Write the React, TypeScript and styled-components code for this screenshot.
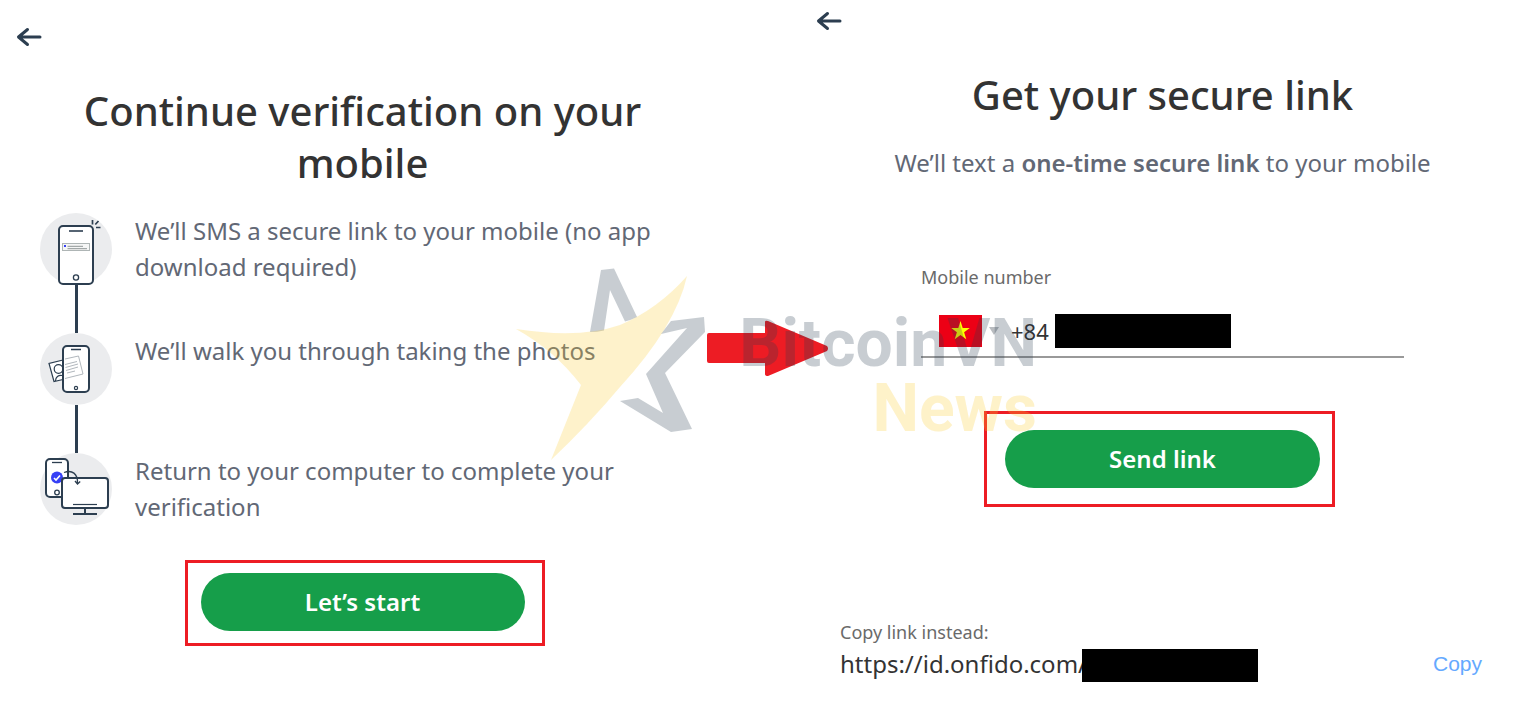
import React from "react";
import styled, { createGlobalStyle } from "styled-components";

const Global = createGlobalStyle`
  *, *::before, *::after { box-sizing: border-box; }
  body { margin: 0; background: #fff; font-family: "Noto Sans", sans-serif; color: #333; }
  h1, p, ol { margin: 0; padding: 0; }
`;

const Page = styled.main`
  position: relative;
  display: flex;
  justify-content: space-between;
  gap: 75px;
  min-height: 100vh;
  padding-right: 3px;
  overflow: hidden;
`;

const Panel = styled.section<{ $top: number }>`
  flex: 1;
  display: flex;
  flex-direction: column;
  padding-top: ${(p) => p.$top}px;
`;

const BackButton = styled.button`
  align-self: flex-start;
  margin-left: 16px;
  padding: 0;
  width: 26px;
  height: 20px;
  border: 0;
  background: none;
  svg { display: block; }
`;

const Title = styled.h1`
  margin-top: 38px;
  padding: 0 48px;
  font-size: 40px;
  line-height: 52px;
  font-weight: 500;
  text-align: center;
`;

const Subtitle = styled.p`
  margin-top: 24px;
  font-size: 24px;
  line-height: 36px;
  text-align: center;
  color: #626875;
  strong { font-weight: 600; }
`;

const Steps = styled.ol`
  list-style: none;
  margin: 24px 40px 0;
`;

const Step = styled.li`
  display: flex;
  gap: 23px;
  font-size: 24px;
  line-height: 36px;
  color: #626875;
`;

const Marker = styled.div<{ $last?: boolean }>`
  display: flex;
  flex-direction: column;
  align-items: center;
  flex: none;
  width: 72px;
  height: ${(p) => (p.$last ? 72 : 120)}px;
  &::after {
    content: "";
    flex: 1;
    width: 3px;
    background: #2c3e50;
  }
  svg { display: block; flex: none; }
`;

/* Red frame drawn round the button without taking part in the flow. */
const Callout = styled.div<{ $inset: string; $gap: number }>`
  position: relative;
  align-self: center;
  margin-top: ${(p) => p.$gap}px;
  &::after {
    content: "";
    position: absolute;
    inset: ${(p) => p.$inset};
    border: 3px solid #ed1c24;
    pointer-events: none;
  }
`;

const Primary = styled.button<{ $width: number }>`
  display: block;
  width: ${(p) => p.$width}px;
  height: 58px;
  padding: 0;
  border: 0;
  border-radius: 29px;
  background: #169e4a;
  color: #fff;
  font: 600 24px/36px "Noto Sans", sans-serif;
`;

const Field = styled.div`
  display: flex;
  flex-direction: column;
  align-self: center;
  width: 483px;
  margin-top: 83px;
`;

const SmallLabel = styled.label`
  font-size: 18px;
  line-height: 27px;
  color: #6a6a6a;
`;

const PhoneRow = styled.div`
  display: flex;
  align-items: center;
  margin-top: 17px;
  height: 50px;
  padding: 0 0 2px 18px;
  border-bottom: 2px solid #999;
`;

const Country = styled.button`
  display: flex;
  align-items: center;
  gap: 7px;
  width: 72px;
  padding: 0;
  border: 0;
  background: none;
`;

const Phone = styled.input`
  width: 44px;
  padding: 0;
  border: 0;
  outline: 0;
  background: none;
  color: #333;
  font: 400 22px/30px "Noto Sans", sans-serif;
`;

const Redaction = styled.span<{ $height: number }>`
  flex: none;
  width: 176px;
  height: ${(p) => p.$height}px;
  background: #000;
`;

const CopyBlock = styled.div`
  display: flex;
  flex-direction: column;
  margin: 131px 43px 0 40px;
`;

const CopyRow = styled.div`
  display: flex;
  align-items: center;
  height: 36px;
  ${Redaction} {
    align-self: flex-end;
    margin-left: -5px;
  }
`;

const Url = styled.output`
  font-size: 24px;
  line-height: 36px;
  color: #333;
`;

const CopyButton = styled.button`
  margin-left: auto;
  padding: 0;
  border: 0;
  background: none;
  color: #65a9ff;
  font: 400 21px/30px "Liberation Sans", sans-serif;
`;

const Overlay = styled.svg`
  position: absolute;
  top: 260px;
  left: calc(50% - 264px);
  pointer-events: none;
`;

const Wordmark = styled.text`
  font: 700 66px "Roboto", sans-serif;
  text-anchor: end;
`;

const Ink = "#2c3e50";

const BackArrow = () => (
  <svg width="26" height="20" viewBox="0 0 26 20" fill="none" stroke={Ink} strokeWidth="3" strokeLinecap="round" strokeLinejoin="round">
    <path d="M24 10H3M11.500 2.500L2.500 10L11.500 17.500" />
  </svg>
);

const SmsIcon = () => (
  <svg width="72" height="72" viewBox="0 0 72 72" fill="none" overflow="visible">
    <circle cx="36" cy="36" r="36" fill="#ebecee" />
    <rect x="19" y="13" width="34" height="58" rx="4" fill="#fff" stroke={Ink} strokeWidth="2" />
    <path d="M29 18h14" stroke={Ink} strokeWidth="1.600" />
    <circle cx="36" cy="64.500" r="2.600" stroke={Ink} strokeWidth="1.300" />
    <rect x="22.500" y="30.500" width="27" height="7" fill="#f5f6f6" stroke="#aeb5b5" />
    <rect x="24" y="32" width="2" height="2" fill="#3640f5" />
    <path d="M27.500 33.300H43M27.500 35.700H47" stroke="#8f9696" strokeWidth="1" />
    <path d="M52.500 7v4.500M55.300 11.500L58.500 8M56 14.500h4.500" stroke={Ink} strokeWidth="1.700" />
  </svg>
);

const PhotoIcon = () => (
  <svg width="72" height="72" viewBox="0 0 72 72" fill="none">
    <circle cx="36" cy="36" r="36" fill="#ebecee" />
    <g stroke={Ink} strokeWidth="1.200">
      <path d="M23 27L9 30.500L14 48.500L23 46.500" fill="#fff" />
      <circle cx="18.500" cy="36" r="4.300" />
      <path d="M15.500 48c0-4 3-6 6.500-5.500" />
    </g>
    <rect x="23" y="13" width="26" height="46" rx="4" fill="#fff" stroke={Ink} strokeWidth="2" />
    <path d="M31 16.500h10" stroke={Ink} strokeWidth="1.500" />
    <circle cx="36" cy="55" r="1.600" stroke={Ink} strokeWidth="1.200" />
    <g stroke="#b1b7bd" strokeWidth="1">
      <path d="M25 26L38.500 23L43 41L25 45.500" />
      <path d="M25 31.500L37 28.500M25.500 34.500L38 31M26 37.500L38 34M27 40L35 38" />
    </g>
  </svg>
);

const ReturnIcon = () => (
  <svg width="72" height="72" viewBox="0 0 72 72" fill="none">
    <circle cx="36" cy="36" r="36" fill="#ebecee" />
    <rect x="6" y="6" width="22" height="38" rx="4" fill="#fff" stroke={Ink} strokeWidth="2" />
    <path d="M12 9.500h10" stroke={Ink} strokeWidth="1.300" />
    <circle cx="17" cy="39.500" r="2.300" stroke={Ink} strokeWidth="1.300" />
    <circle cx="17" cy="24.500" r="6" fill="#3640f5" />
    <path d="M14 25l2 2l4-4.500" stroke="#fff" strokeWidth="1.600" />
    <rect x="22" y="25" width="46" height="30" rx="3" fill="#fff" stroke={Ink} strokeWidth="2" />
    <path d="M33 51.500h24" stroke={Ink} strokeWidth="1.200" />
    <path d="M45 56v5M33 61h24" stroke={Ink} strokeWidth="2" />
    <path d="M24 19.500c8-3 14 1 13.500 11M35 28l2.500 3l2.700-2.500" stroke={Ink} strokeWidth="1.300" />
  </svg>
);

const Flag = () => (
  <svg width="43" height="32" viewBox="0 0 43 32">
    <path d="M0 0h43v32H0z" fill="#ec0015" />
    <path d="M21.500 6l2.200 6.900h7.100l-5.700 4.300 2.200 7-5.800-4.300-5.800 4.300 2.200-7-5.700-4.300h7.100z" fill="#ff0" />
  </svg>
);

const Caret = () => (
  <svg width="10" height="8" viewBox="0 0 10 8">
    <path d="M0 0h10L5 8z" fill="#b9bcc0" />
  </svg>
);

/* Step-to-step arrow with the BitcoinVN News mark laid over it. */
const BrandOverlay = () => (
  <Overlay width="560" height="205" viewBox="500 260 560 205" role="img" aria-label="BitcoinVN News">
    <path d="M709 333H765V322Q765 320 768 321L827 346Q829 348.500 827 351L768 376Q765 376 765 374V363H709Q707 363 707 361V335Q707 333 709 333Z" fill="#ed1c24" />
    <g fill="#273c4f" opacity="0.25">
      <path d="M601 270L614 268.500L637 317Q631 320 625 321.500L610 290L604 330.500Q597 332 590 332Z" />
      <path d="M671 321L704 317L705 332L665 373L692 429L671 432L620 401L638 398L663 413L646 374L687 328L661 334Z" />
      <Wordmark x="1037" y="366">BitcoinVN</Wordmark>
    </g>
    <g fill="#fccc2e" opacity="0.25">
      <path d="M516 329Q580 339 620 325Q658 309 687 276Q676 326 620 387Q589 424 551 460L581 385Q554 350 516 329Z" />
      <Wordmark x="1037" y="431">News</Wordmark>
    </g>
  </Overlay>
);

export default function App() {
  return (
    <>
      <Global />
      <Page>
        <Panel $top={27}>
          <BackButton aria-label="Back"><BackArrow /></BackButton>
          <Title>Continue verification on your mobile</Title>
          <Steps>
            <Step><Marker><SmsIcon /></Marker><p>We’ll SMS a secure link to your mobile (no app download required)</p></Step>
            <Step><Marker><PhotoIcon /></Marker><p>We’ll walk you through taking the photos</p></Step>
            <Step><Marker $last><ReturnIcon /></Marker><p>Return to your computer to complete your verification</p></Step>
          </Steps>
          <Callout $gap={48} $inset="-13px -20px -15px -16px">
            <Primary $width={324}>Let’s start</Primary>
          </Callout>
        </Panel>
        <Panel $top={11}>
          <BackButton aria-label="Back"><BackArrow /></BackButton>
          <Title>Get your secure link</Title>
          <Subtitle>We’ll text a <strong>one-time secure link</strong> to your mobile</Subtitle>
          <Field>
            <SmallLabel htmlFor="phone">Mobile number</SmallLabel>
            <PhoneRow>
              <Country aria-label="Country: Vietnam"><Flag /><Caret /></Country>
              <Phone id="phone" type="tel" defaultValue="+84" />
              <Redaction $height={34} />
            </PhoneRow>
          </Field>
          <Callout $gap={72} $inset="-19px -15px -19px -21px">
            <Primary $width={315}>Send link</Primary>
          </Callout>
          <CopyBlock>
            <SmallLabel htmlFor="link">Copy link instead:</SmallLabel>
            <CopyRow>
              <Url id="link">https://id.onfido.com/</Url>
              <Redaction $height={33} />
              <CopyButton>Copy</CopyButton>
            </CopyRow>
          </CopyBlock>
        </Panel>
        <BrandOverlay />
      </Page>
    </>
  );
}
